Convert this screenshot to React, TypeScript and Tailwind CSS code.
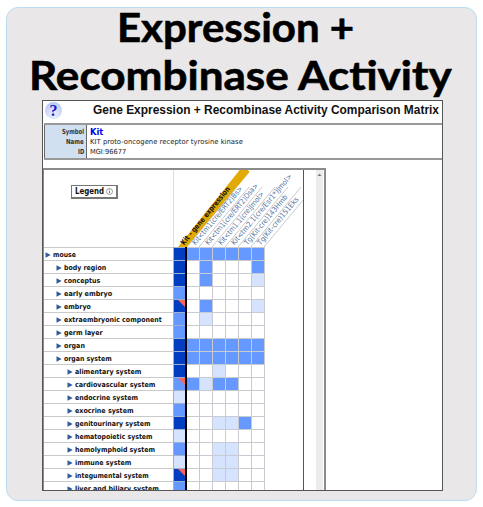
import { useLayoutEffect, useRef, useState } from "react";

type FitProps = { text: string; width: number; className?: string };

function Fit({ text, width, className = "" }: FitProps) {
  const ref = useRef<HTMLSpanElement>(null);
  const [scale, setScale] = useState(1);
  useLayoutEffect(() => {
    if (ref.current) setScale(width / ref.current.offsetWidth);
  }, [width]);
  return (
    <span className="flex items-start overflow-visible whitespace-nowrap" style={{ width }}>
      <span className={`block shrink-0 origin-left ${className}`} ref={ref} style={{ transform: `scaleX(${scale})` }}>
        {text}
      </span>
    </span>
  );
}

const shades: Record<string, string> = {
  D: "bg-[#003dc1]",
  M: "bg-[#6699ff]",
  L: "bg-[#d6e3ff]",
  ".": "bg-white",
};

type Row = { name: string; level: number; width: number; gene: string; cells: string; flag?: boolean };

const rows: Row[] = [
  { name: "mouse", level: 0, width: 23, gene: "D", cells: "MMMMMM" },
  { name: "body region", level: 1, width: 42, gene: "D", cells: ".M...M" },
  { name: "conceptus", level: 1, width: 36, gene: "D", cells: ".M...L" },
  { name: "early embryo", level: 1, width: 48, gene: "M", cells: "......" },
  { name: "embryo", level: 1, width: 27, gene: "D", cells: ".M...L", flag: true },
  { name: "extraembryonic component", level: 1, width: 98, gene: "M", cells: ".L...." },
  { name: "germ layer", level: 1, width: 39, gene: "M", cells: "......" },
  { name: "organ", level: 1, width: 21, gene: "D", cells: "MMMMMM" },
  { name: "organ system", level: 1, width: 48, gene: "D", cells: "MMMMMM" },
  { name: "alimentary system", level: 2, width: 66, gene: "D", cells: "..L..." },
  { name: "cardiovascular system", level: 2, width: 80, gene: "M", cells: "MLMM..", flag: true },
  { name: "endocrine system", level: 2, width: 63, gene: "L", cells: "......" },
  { name: "exocrine system", level: 2, width: 59, gene: "M", cells: "......" },
  { name: "genitourinary system", level: 2, width: 76, gene: "D", cells: "..LLM." },
  { name: "hematopoietic system", level: 2, width: 78, gene: "L", cells: "......" },
  { name: "hemolymphoid system", level: 2, width: 80, gene: "M", cells: "..LL.." },
  { name: "immune system", level: 2, width: 56, gene: "L", cells: "..LL.." },
  { name: "integumental system", level: 2, width: 74, gene: "D", cells: "..LL..", flag: true },
  { name: "liver and biliary system", level: 2, width: 84, gene: "M", cells: "......" },
];

const indents = ["pl-px", "pl-3", "pl-[23px]"];

const alleles = [
  { text: "Kit<tm1(cre/ERT2)Bs>", x: 20, length: 74 },
  { text: "Kit<tm1(cre/ERT2)Dsa>", x: 33, length: 78 },
  { text: "Kit<tm1.1(cre)Jmol>", x: 46, length: 67 },
  { text: "Kit<tm2.1(cre/Esr1*)Jmol>", x: 59, length: 90 },
  { text: "Tg(Kit-cre)143Hmb", x: 72, length: 63 },
  { text: "Tg(Kit-cre)151Eks", x: 85, length: 60 },
];

function ColumnHeads() {
  return (
    <svg width="129" height="77" viewBox="0 1 129 77" className="block shrink-0">
      <polygon points="4,78 13,78 75.5,3 73,0 66.5,0" fill="#e2aa05" />
      {[13, 25, 38, 51, 64, 77, 90].map((x) => (
        <line key={x} x1={x} y1="78" x2={x + 50} y2="18" stroke="#c4c4c4" strokeWidth="0.9" />
      ))}
      <text transform="translate(10 76.5) rotate(-50.5)" textLength="73" lengthAdjust="spacingAndGlyphs" fontSize="7.4" fontWeight="bold" fill="#111" fontFamily="DejaVu Sans, sans-serif">
        Kit - gene expression
      </text>
      {alleles.map((a) => (
        <text key={a.text} transform={`translate(${a.x + 1.5} 76.5) rotate(-50)`} textLength={a.length} lengthAdjust="spacingAndGlyphs" fontSize="7.4" fill="#56759f" fontFamily="DejaVu Sans, sans-serif">
          {a.text}
        </text>
      ))}
    </svg>
  );
}

function MatrixRow({ row }: { row: Row }) {
  return (
    <div className="flex h-[13px] shrink-0">
      <div className={`flex w-[129px] items-center border-t border-[#c9c9c9] pt-[2px] ${indents[row.level]}`}>
        <svg width="6" height="6" viewBox="0 0 6 6" className="mr-[2px] shrink-0">
          <path d="M0.5 0.2 L5.7 3 L0.5 5.8Z" fill="#315b9b" />
        </svg>
        <Fit text={row.name} width={row.width} className="text-[7px] leading-[12px] font-bold text-[#111]" />
      </div>
      <div className={`flex w-[12px] justify-end border-t border-l border-[#9fb0cf] ${shades[row.gene]}`}>
        {row.flag && (
          <svg width="7" height="7" viewBox="0 0 7 7">
            <path d="M0 0H7V7Z" fill="#ff6258" />
          </svg>
        )}
      </div>
      <div className="w-[2px] bg-black" />
      {row.cells.split("").map((c, i) => (
        <div key={i} className={`h-[13px] w-[13px] border-t border-r border-[#c8cbd2] ${shades[c]}`} />
      ))}
    </div>
  );
}

export default function App() {
  return (
    <div className="flex h-[507px] w-[483px] flex-col bg-white pt-[7px] pl-[6px] font-['DejaVu_Sans',sans-serif]">
      <div className="flex h-[494px] w-[471px] flex-col rounded-[12px] border border-[#bbdcf1] bg-[#e9e7e8]">
        <h1 className="flex h-[92px] shrink-0 flex-col font-['Century_Gothic','URW_Gothic',Lato,sans-serif] text-[40px] leading-[48px] font-bold text-black [-webkit-text-stroke:0.6px_black]">
          <span className="-mt-[5px] h-[48px] pl-[110px]">
            <Fit text="Expression +" width={237} />
          </span>
          <span className="h-[48px] pl-[22px]">
            <Fit text="Recombinase Activity" width={423} />
          </span>
        </h1>
        <div className="ml-[35px] flex h-[391px] w-[401px] shrink-0 flex-col overflow-hidden border border-[#555] bg-white">
          <div className="flex h-[22px] shrink-0 items-start pl-[2px]">
            <div className="mt-[1px] flex size-[17px] shrink-0 items-center justify-center rounded-full bg-[radial-gradient(circle_at_50%_75%,#eef3ff,#a9bdf0)] font-['Liberation_Serif',serif] text-[16px] leading-[17px] font-bold text-[#1717c9]">
              ?
            </div>
            <span className="ml-[31px] pt-px text-[#111]">
              <Fit text="Gene Expression + Recombinase Activity Comparison Matrix" width={346} className="font-['Liberation_Sans',sans-serif] text-[12px] leading-[17px] font-bold" />
            </span>
          </div>
          <div className="ml-px flex h-[37px] shrink-0 border-y-2 border-[#999] text-[7px] leading-[10px]">
            <div className="flex w-[43px] flex-col items-end border-r border-l border-[#666] bg-[#d0e0f1] pt-[2px] pr-[2px] font-bold text-[#333]">
              <Fit text="Symbol" width={22} />
              <Fit text="Name" width={18} />
              <Fit text="ID" width={6} />
            </div>
            <div className="flex flex-col pt-[2px] pl-[3px] text-[#222]">
              <Fit text="Kit" width={13} className="text-[9px] leading-[10px] font-bold text-[#0000ee]" />
              <Fit text="KIT proto-oncogene receptor tyrosine kinase" width={153} />
              <Fit text="MGI:96677" width={36} />
            </div>
          </div>
          <div className="mt-2 flex h-[330px] w-[283px] shrink-0 border-t-2 border-r-2 border-l border-[#8b8b8b]">
            <div className="flex w-[260px] shrink-0 flex-col overflow-hidden border-r border-[#555]">
              <div className="flex h-[77px] shrink-0">
                <div className="w-[130px] shrink-0 border-r border-[#ddd] pt-[15px] pl-[27px]">
                  <button className="flex h-[14px] w-[47px] items-center justify-center gap-[2px] border border-r-2 border-b-2 border-[#777] bg-white text-[#111]">
                    <Fit text="Legend" width={29} className="text-[8px] leading-[11px] font-bold" />
                    <svg width="7" height="7" viewBox="0 0 7 7">
                      <circle cx="3.5" cy="3.5" r="3" fill="none" stroke="#777" strokeWidth="0.7" />
                      <path d="M3.5 3v2.2M3.5 1.5v.8" stroke="#555" strokeWidth="0.8" />
                    </svg>
                  </button>
                </div>
                <ColumnHeads />
              </div>
              {rows.map((row) => (
                <MatrixRow key={row.name} row={row} />
              ))}
            </div>
            <div className="ml-[12px] flex w-[7px] justify-center bg-[#ececec] pt-[3px]">
              <svg width="5" height="4" viewBox="0 0 5 4">
                <path d="M0.5 3L2.5 0.7L4.5 3Z" fill="#777" />
              </svg>
            </div>
          </div>
        </div>
      </div>
    </div>
  );
}
